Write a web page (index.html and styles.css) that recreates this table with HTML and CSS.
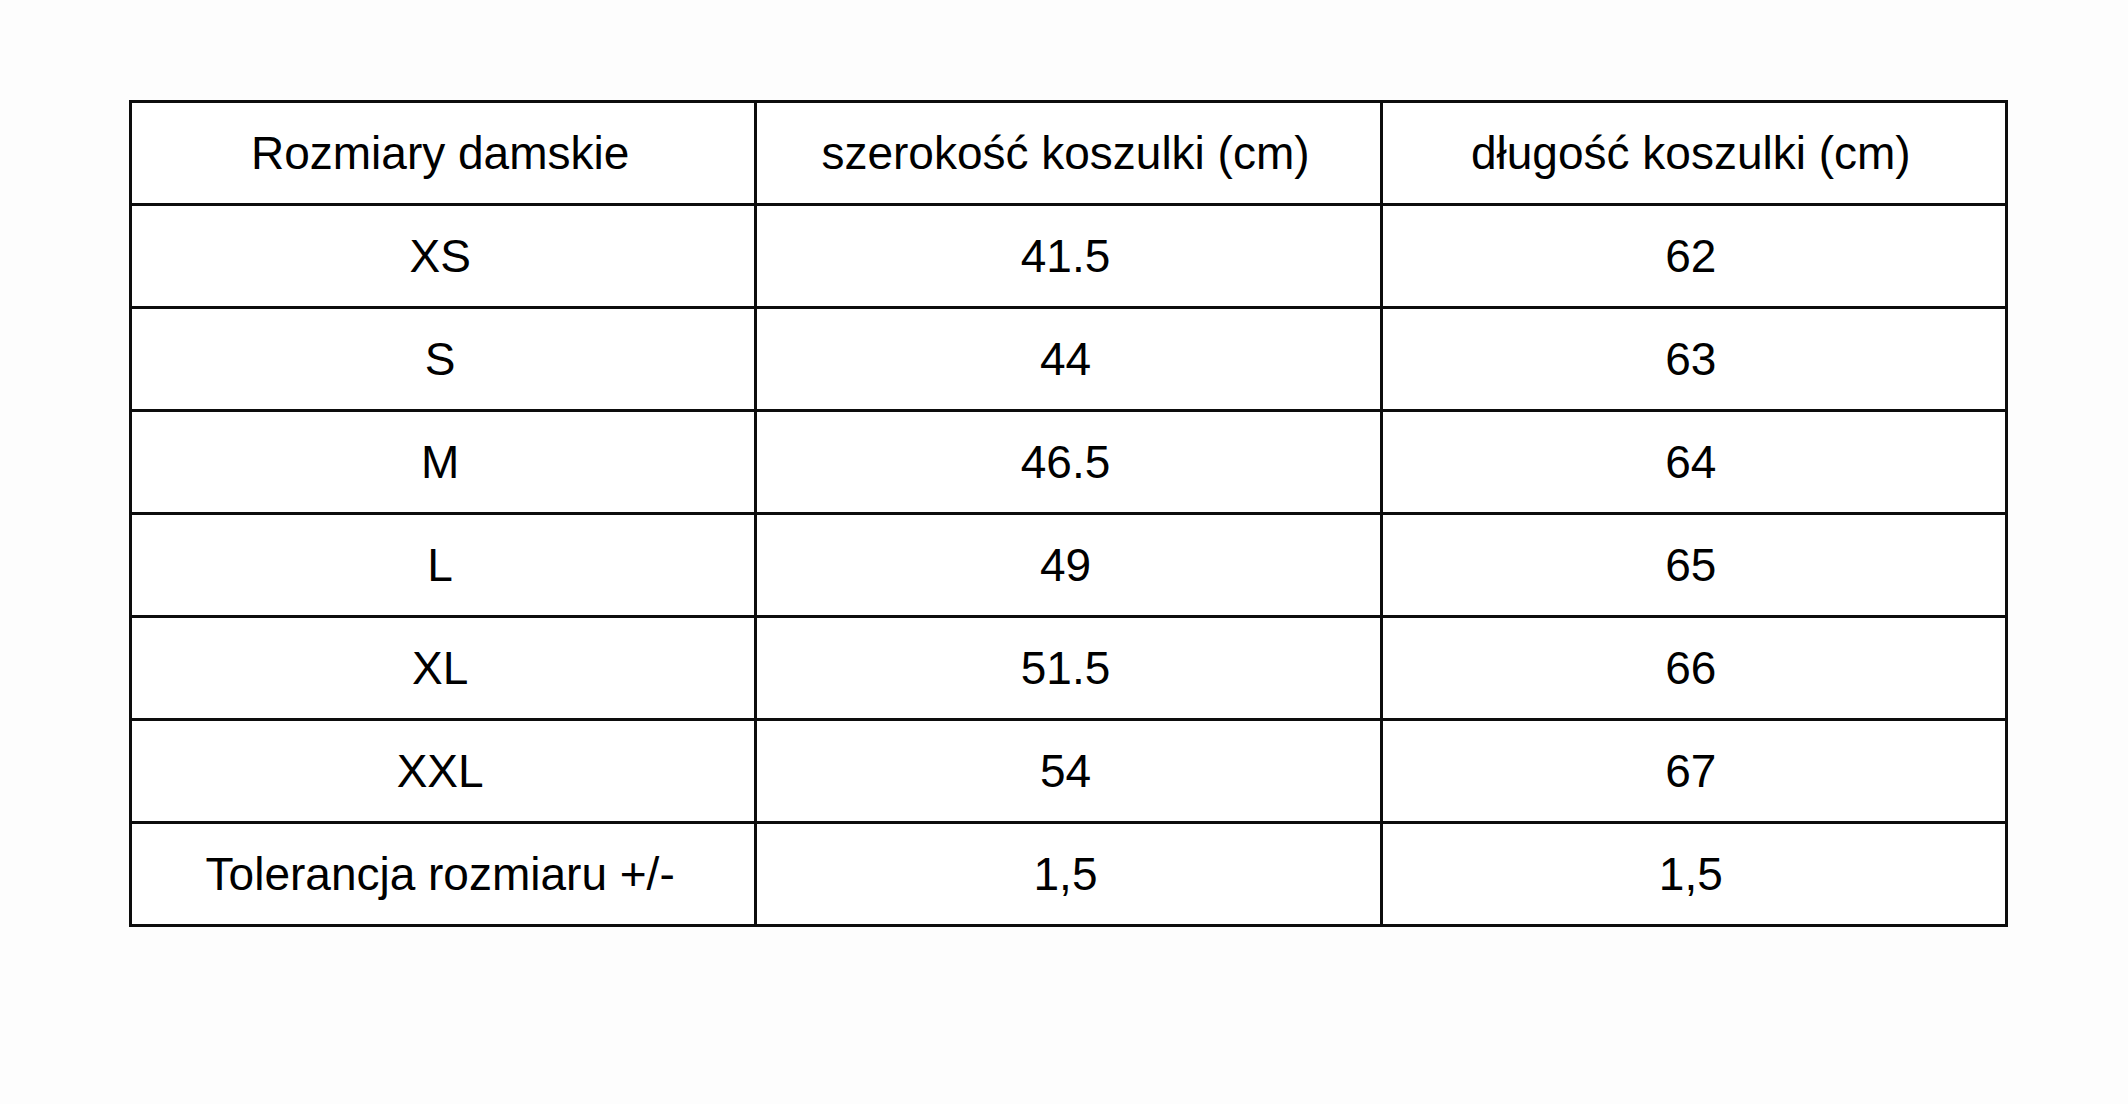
FILE: index.html
```html
<!DOCTYPE html>
<html lang="pl">
<head>
<meta charset="utf-8">
<title>Rozmiary damskie</title>
<link rel="stylesheet" href="styles.css">
</head>
<body>
<main class="page">
  <div class="size-table">
    <div class="cell">Rozmiary damskie</div>
    <div class="cell">szerokość koszulki (cm)</div>
    <div class="cell">długość koszulki (cm)</div>

    <div class="cell">XS</div>
    <div class="cell">41.5</div>
    <div class="cell">62</div>

    <div class="cell">S</div>
    <div class="cell">44</div>
    <div class="cell">63</div>

    <div class="cell">M</div>
    <div class="cell">46.5</div>
    <div class="cell">64</div>

    <div class="cell">L</div>
    <div class="cell">49</div>
    <div class="cell">65</div>

    <div class="cell">XL</div>
    <div class="cell">51.5</div>
    <div class="cell">66</div>

    <div class="cell">XXL</div>
    <div class="cell">54</div>
    <div class="cell">67</div>

    <div class="cell">Tolerancja rozmiaru +/-</div>
    <div class="cell">1,5</div>
    <div class="cell">1,5</div>
  </div>
</main>
</body>
</html>
```

FILE: styles.css
```css
html, body {
  margin: 0;
  padding: 0;
  background: #fdfdfd;
}

.page {
  padding: 100px 0 0 129px;
  width: 2128px;
  height: 1104px;
  box-sizing: border-box;
}

.size-table {
  width: 1879px;
  box-sizing: border-box;
  display: grid;
  grid-template-columns: repeat(3, 1fr);
  grid-auto-rows: 100px;
  gap: 3px;
  padding: 3px;
  background: #0d0d0d;
  font-family: "Liberation Sans", Arial, sans-serif;
  font-size: 46px;
  color: #000;
}

.cell {
  background: #fff;
  display: flex;
  align-items: center;
  justify-content: center;
  padding-right: 6px;
  white-space: nowrap;
}
```
